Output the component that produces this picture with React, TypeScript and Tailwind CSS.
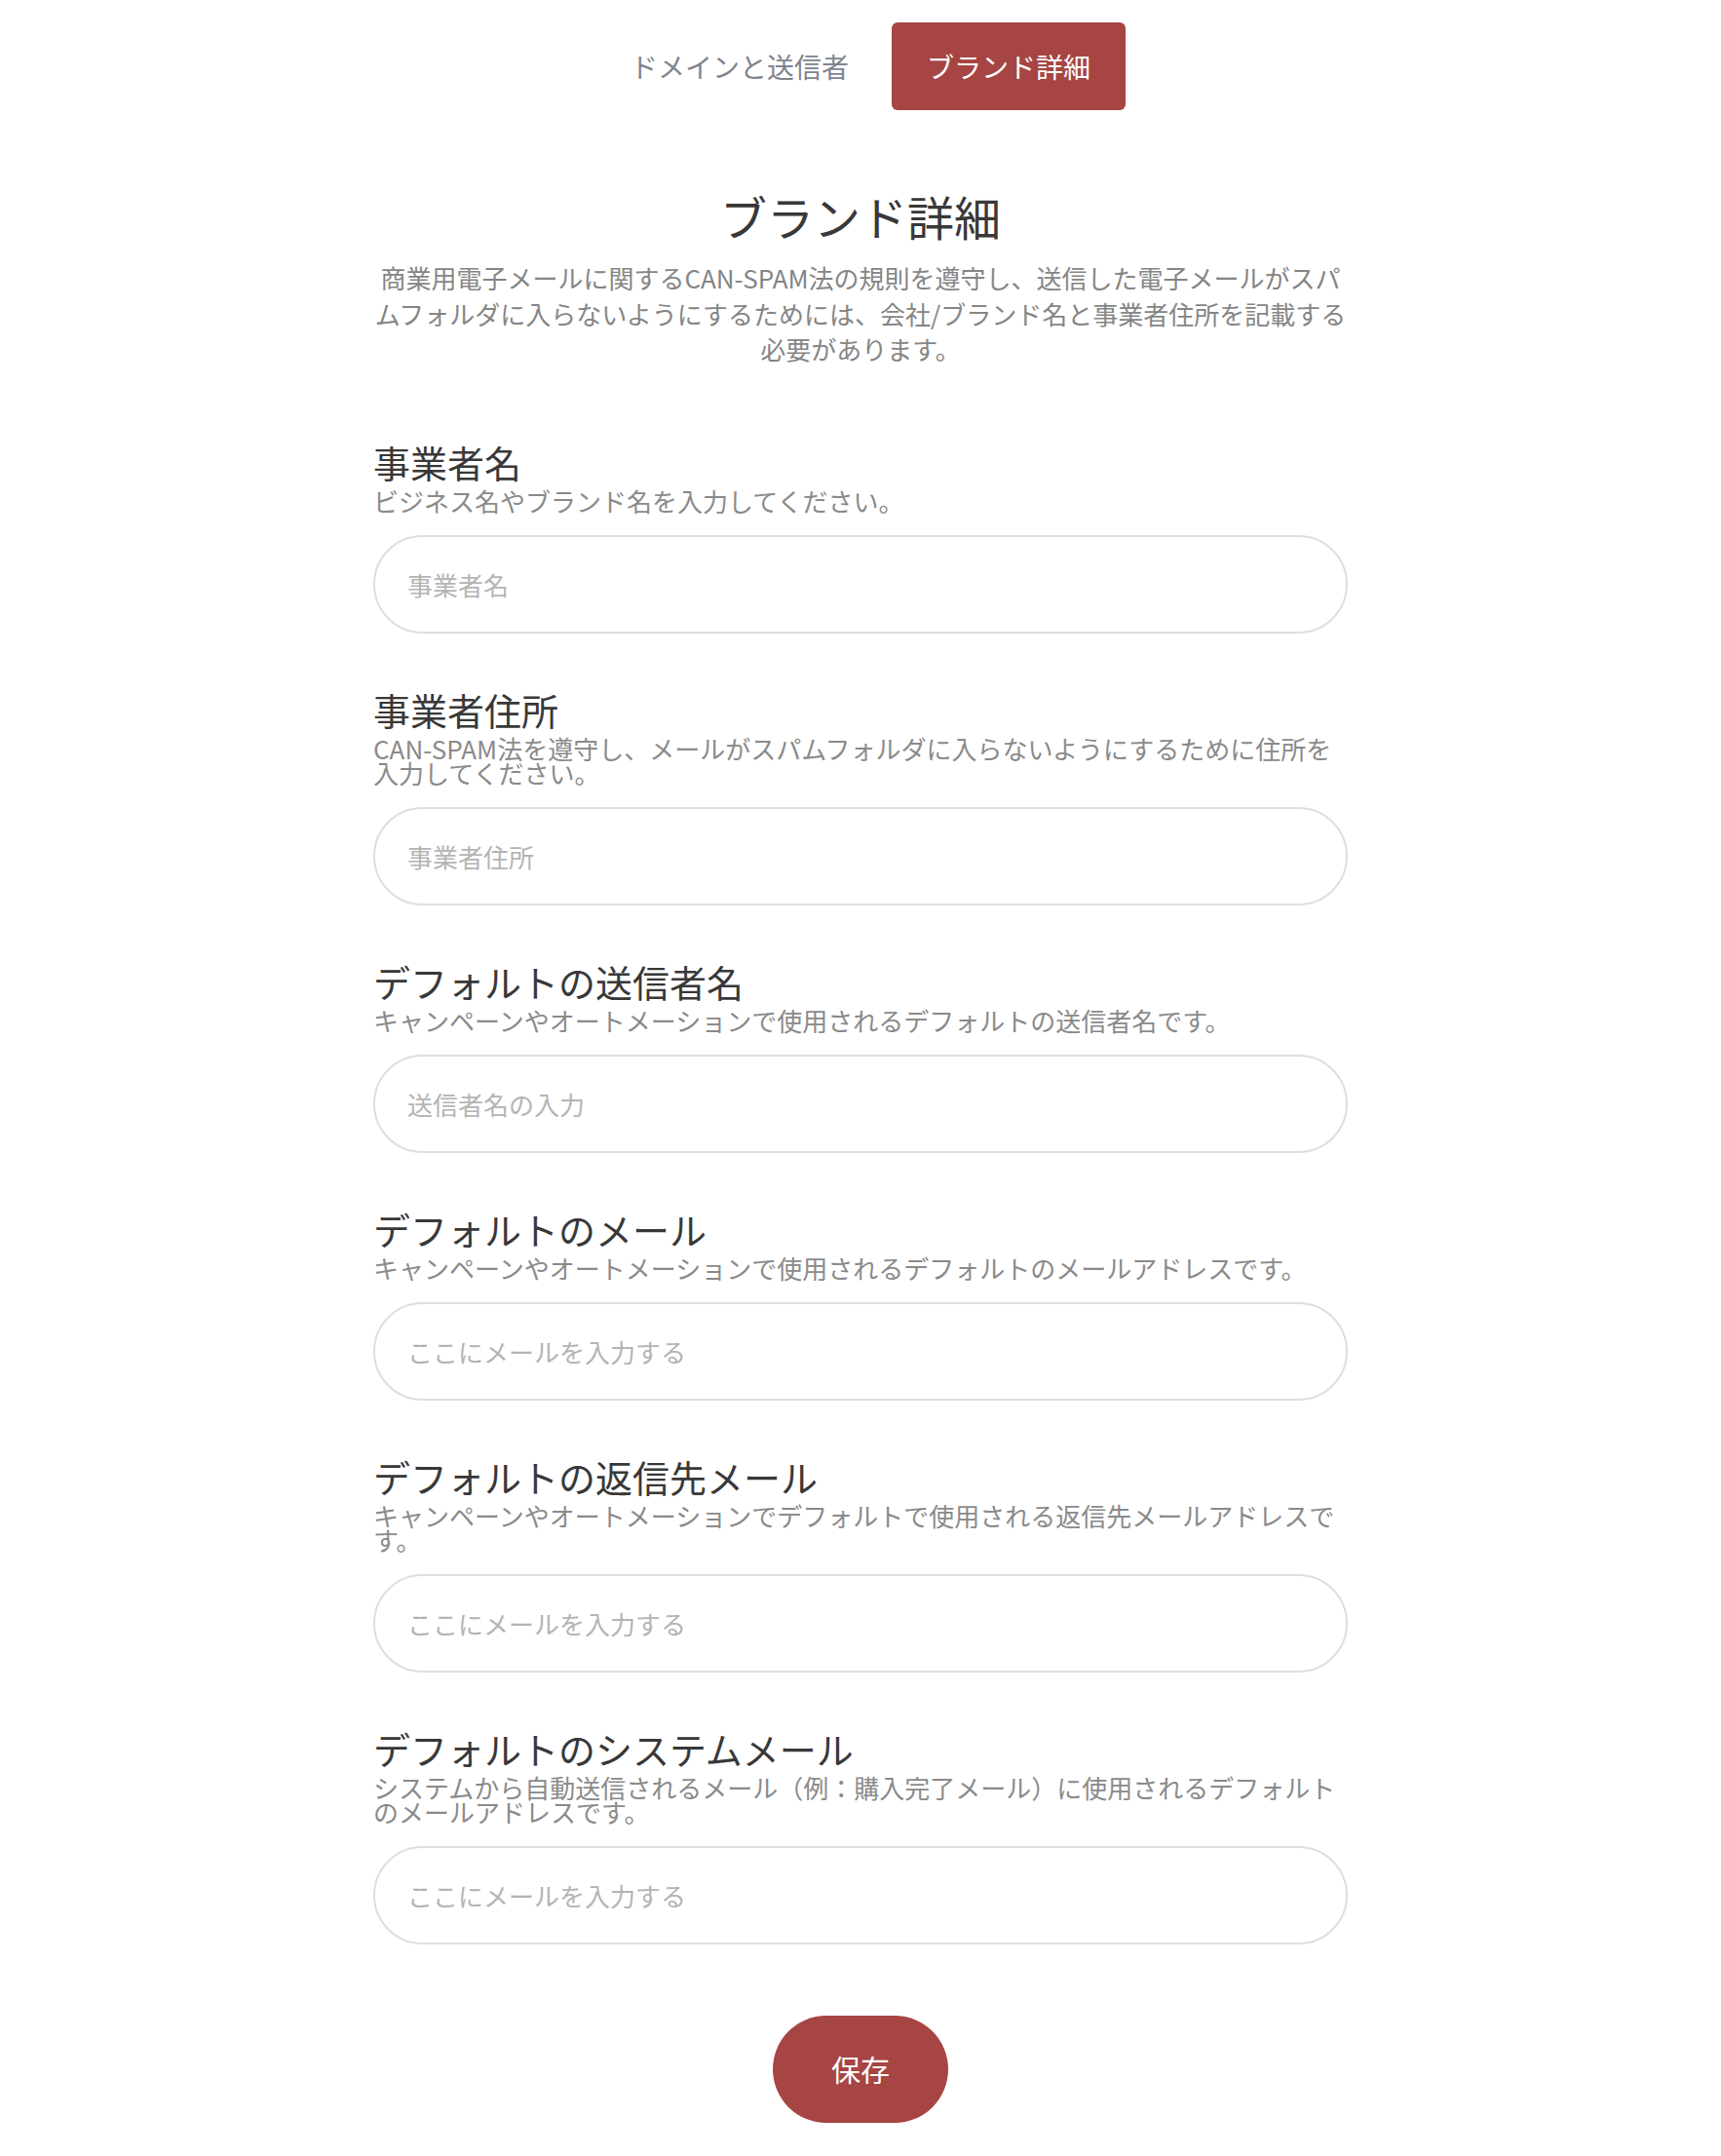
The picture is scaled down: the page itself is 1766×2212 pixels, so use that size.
import React from 'react'

interface FieldProps {
  label: string
  help: string
  placeholder: string
  type?: string
}

const Field: React.FC<FieldProps> = ({ label, help, placeholder, type = 'text' }) => (
  <div className="flex flex-col">
    <label className="text-[38px] leading-[48px] text-[#383838]">{label}</label>
    <p className="mt-[3px] text-[26px] leading-[25px] text-[#8a8a8a]">{help}</p>
    <input
      type={type}
      placeholder={placeholder}
      className="mt-[23px] h-[101px] w-full rounded-full border-2 border-[#dedede] bg-white px-[33px] text-[26px] text-[#333] placeholder:text-[#b4b4b4] outline-none"
    />
  </div>
)

const fields: FieldProps[] = [
  { label: '事業者名', help: 'ビジネス名やブランド名を入力してください。', placeholder: '事業者名' },
  {
    label: '事業者住所',
    help: 'CAN-SPAM法を遵守し、メールがスパムフォルダに入らないようにするために住所を入力してください。',
    placeholder: '事業者住所',
  },
  {
    label: 'デフォルトの送信者名',
    help: 'キャンペーンやオートメーションで使用されるデフォルトの送信者名です。',
    placeholder: '送信者名の入力',
  },
  {
    label: 'デフォルトのメール',
    help: 'キャンペーンやオートメーションで使用されるデフォルトのメールアドレスです。',
    placeholder: 'ここにメールを入力する',
    type: 'email',
  },
  {
    label: 'デフォルトの返信先メール',
    help: 'キャンペーンやオートメーションでデフォルトで使用される返信先メールアドレスです。',
    placeholder: 'ここにメールを入力する',
    type: 'email',
  },
  {
    label: 'デフォルトのシステムメール',
    help: 'システムから自動送信されるメール（例：購入完了メール）に使用されるデフォルトのメールアドレスです。',
    placeholder: 'ここにメールを入力する',
    type: 'email',
  },
]

export default function App() {
  return (
    <div className="min-h-screen bg-white font-['Noto_Sans_CJK_JP','Noto_Sans',sans-serif]">
      <nav className="flex justify-center gap-2 pt-[23px]">
        <button className="h-[90px] rounded-md px-9 text-[28px] text-[#80848f]">ドメインと送信者</button>
        <button className="h-[90px] rounded-md bg-[#a64543] px-9 text-[28px] text-white">ブランド詳細</button>
      </nav>

      <main className="mx-auto flex w-[1000px] flex-col pb-[34px]">
        <h1 className="mt-[72px] text-center text-[48px] leading-[72px] text-[#383838]">ブランド詳細</h1>
        <p className="mt-[10px] text-center text-[26px] leading-[36.5px] text-[#858585]">
          商業用電子メールに関するCAN-SPAM法の規則を遵守し、送信した電子メールがスパムフォルダに入らないようにするためには、会社/ブランド名と事業者住所を記載する必要があります。
        </p>

        <form className="mt-[73px] flex flex-col gap-[54px]">
          {fields.map((f) => (
            <Field key={f.label} {...f} />
          ))}
        </form>

        <div className="mt-[73px] flex justify-center">
          <button className="h-[110px] w-[180px] rounded-full bg-[#a64543] text-[30px] text-white">保存</button>
        </div>
      </main>
    </div>
  )
}
